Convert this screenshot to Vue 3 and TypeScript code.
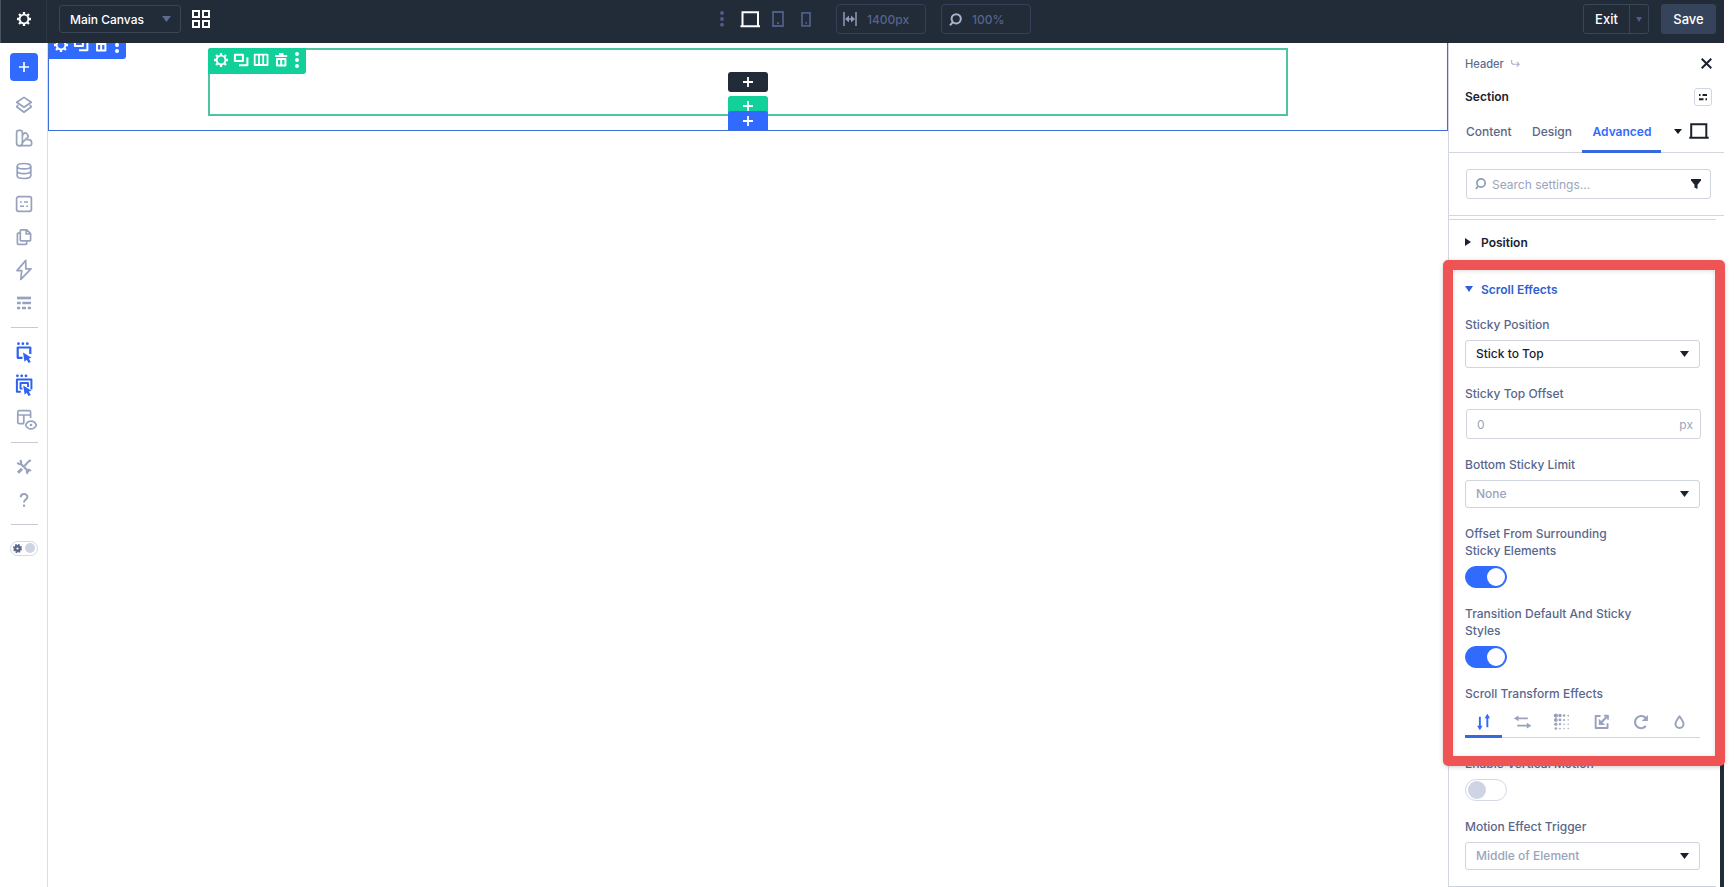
<script setup lang="ts">
interface Shape {
  d: string
  solid?: boolean
  width?: number
}
type IconName = string

const icons: Record<IconName, Shape[]> = {
  gear: [
    { d: 'M12 7.6a4.4 4.4 0 1 0 0 8.8a4.4 4.4 0 1 0 0-8.8z', width: 1.9 },
    { d: 'M12 5v2M12 17v2M5 12h2M17 12h2M7.05 7.05l1.4 1.4M15.55 15.55l1.4 1.4M16.95 7.05l-1.4 1.4M8.45 15.55l-1.4 1.4', width: 2.3 },
  ],
  duplicate: [
    { d: 'M5.9 6.7h8v6.2h-8z', width: 2 },
    { d: 'M18.4 9.2v8.1H10', width: 2 },
  ],
  columns: [{ d: 'M5.7 6.7h12.8v10.3h-12.8zM10 6.7v10.4M14.2 6.7v10.4', width: 1.8 }],
  trash: [
    { d: 'M6.2 8h12M10 6h4.4', width: 2 },
    { d: 'M8 11h8.4v6.5H8zM12.2 11v6.5', width: 2 },
  ],
  dots: [{ d: 'M12 3.9a2 2 0 1 0 0 4a2 2 0 1 0 0-4zM12 9.9a2 2 0 1 0 0 4a2 2 0 1 0 0-4zM12 15.9a2 2 0 1 0 0 4a2 2 0 1 0 0-4z', solid: true }],
  layers: [
    { d: 'M12 4.4L19.3 9.3L12 14.2L4.7 9.3z' },
    { d: 'M6.2 11.8L4.7 13.8L12 19.2L19.3 13.8L17.8 11.8' },
  ],
  swatch: [
    { d: 'M6.8 4.3h1.4a2.2 2.2 0 0 1 2.2 2.2V17a2.6 2.6 0 0 1-5.8 0V6.5a2.2 2.2 0 0 1 2.2-2.2z' },
    { d: 'M10.4 9.2l1.4-1.6a2 2 0 0 1 3 .1l.9 1.2a2 2 0 0 1-.3 2.7l-5.6 5.6' },
    { d: 'M7.6 19.7h10.2a1.8 1.8 0 0 0 1.8-1.8v-1.2a3 3 0 0 0-3-3h-2' },
    { d: 'M7.4 16.6h.2', width: 1.3 },
  ],
  database: [
    { d: 'M5.2 7.2c0-3.6 13.6-3.6 13.6 0s-13.6 3.6-13.6 0z' },
    { d: 'M5.2 7.2v9.6c0 3.6 13.6 3.6 13.6 0V7.2M5.2 12c0 3.5 13.6 3.5 13.6 0' },
  ],
  form: [
    { d: 'M6.6 4.7h10.8a2 2 0 0 1 2 2v10.6a2 2 0 0 1-2 2H6.6a2 2 0 0 1-2-2V6.7a2 2 0 0 1 2-2z' },
    { d: 'M8 10h1.8M12 10h4M8 14.2h4M14.2 14.2H16', width: 1.5 },
  ],
  pages: [
    { d: 'M9.3 4.8h5.4l3.9 3.9v6.2a1 1 0 0 1-1 1H9.3a1 1 0 0 1-1-1V5.8a1 1 0 0 1 1-1zM14.2 5v4h4' },
    { d: 'M8.3 8.2H6.3a.9 .9 0 0 0-.9 .9v9.3a.9 .9 0 0 0 .9 .9h7.5a.9 .9 0 0 0 .9-.9v-2.5' },
  ],
  bolt: [{ d: 'M13.8 2.4L5 12.6h4.7l-.9 8.8L19 10.8h-5.2z' }],
  rows: [
    { d: 'M5 7h14', width: 2.7 },
    { d: 'M5 12h3.8M10.3 12H19', width: 2.5 },
    { d: 'M5 17h3.2M10 17h4M15.8 17h3.2', width: 2.7 },
  ],
  select: [
    { d: 'M6.5 2.3a1.4 1.4 0 1 0 0 2.8a1.4 1.4 0 1 0 0-2.8zM10.9 2.3a1.4 1.4 0 1 0 0 2.8a1.4 1.4 0 1 0 0-2.8zM15.3 2.3a1.4 1.4 0 1 0 0 2.8a1.4 1.4 0 1 0 0-2.8z', solid: true },
    { d: 'M10.5 17.8H5.7V7.5h12.6v6.5', width: 2.2 },
    { d: 'M11 12.6l8.6 5.2-2.8.8 1.9 3.3-2.1 1.2-1.9-3.3-2.2 2z', solid: true },
  ],
  selectAll: [
    { d: 'M5.4 1.4a1.4 1.4 0 1 0 0 2.8a1.4 1.4 0 1 0 0-2.8zM9.7 1.4a1.4 1.4 0 1 0 0 2.8a1.4 1.4 0 1 0 0-2.8zM14 1.4a1.4 1.4 0 1 0 0 2.8a1.4 1.4 0 1 0 0-2.8z', solid: true },
    { d: 'M8.8 18.8H4.9V6.4h14.5v10', width: 2 },
    { d: 'M10.6 15.6H8.5V10h7.5v4', width: 1.9 },
    { d: 'M11.2 12.6l8.4 5.2-2.8.8 1.9 3.3-2.1 1.2-1.9-3.3-2 2z', solid: true },
  ],
  viewLayout: [
    { d: 'M12 17.6H7.2a1.4 1.4 0 0 1-1.4-1.4V6a1.4 1.4 0 0 1 1.4-1.4h10a1.4 1.4 0 0 1 1.4 1.4v6M5.8 9h12.8M11.8 9v8.400' },
    { d: 'M13.6 19c2.3-5.200 8.500-5.200 10.800 0c-2.300 5.200-8.500 5.200-10.800 0z' },
    { d: 'M19 17.700a1.300 1.300 0 1 0 0 2.600a1.300 1.300 0 1 0 0-2.600z', solid: true },
  ],
  tools: [
    { d: 'M8 8l9 9', width: 2.2 },
    { d: 'M5.4 7.6A3 3 0 0 0 8.8 9A3 3 0 0 0 8 5.2M15.8 18.8A3 3 0 0 1 15.2 15.2A3 3 0 0 1 18.9 15.9', width: 2 },
    { d: 'M18.9 5.2l-2.5 1.5L12.5 11', width: 2 },
    { d: 'M10 13.8l-4 4', width: 3 },
  ],
  help: [
    { d: 'M8.8 9.2c0-4.2 6.6-4.2 6.6-.2c0 2.6-3.4 2.6-3.4 5.4', width: 2 },
    { d: 'M11 16.6h2.1v2.2H11z', solid: true },
  ],
  vertical: [
    { d: 'M8.2 6.5v12M16 17.5v-12', width: 2 },
    { d: 'M5.3 16l2.9 4.6L11 16zM13.2 8L16 3.4L18.8 8z', solid: true },
  ],
  horizontal: [
    { d: 'M6.5 8.2h11M6.5 15.8h11', width: 1.9 },
    { d: 'M7.8 5.2v6L3 8.2zM16.5 12.8v6l4.8-3z', solid: true },
  ],
  scaleOut: [
    { d: 'M11 5.8H5.9v12.4h12.4v-5', width: 2 },
    { d: 'M18.6 5.5l-7.2 7.2', width: 2.2 },
    { d: 'M9.2 8.5v6.7h6.7z', solid: true },
    { d: 'M14.6 5.4h4.2v4.2', width: 1.7 },
  ],
  rotate: [
    { d: 'M17.6 16.2a6.4 6.4 0 1 1 .2-8', width: 2.2 },
    { d: 'M19.7 4.6v6.4h-6.4z', solid: true },
  ],
  drop: [{ d: 'M12 6c-2.2 3.4-4.2 5.6-4.2 8a4.2 4.2 0 0 0 8.4 0c0-2.4-2-4.6-4.2-8z', width: 2 }],
}

const groups: { tone: string; items: IconName[] }[] = [
  { tone: 'muted', items: ['layers', 'swatch', 'database', 'form', 'pages', 'bolt', 'rows'] },
  { tone: 'active', items: ['select', 'selectAll', 'viewLayout'] },
  { tone: 'muted', items: ['tools', 'help'] },
]

const sectionTools: IconName[] = ['gear', 'duplicate', 'trash', 'dots']
const rowTools: IconName[] = ['gear', 'duplicate', 'columns', 'trash', 'dots']
const effectTabs: IconName[] = ['vertical', 'horizontal', 'fade', 'scaleOut', 'rotate', 'drop']
const toolBox = (name: IconName): string => (name === 'dots' ? '6 2 12 20' : '2 2 20 20')

interface Field {
  label: string
  kind: 'select' | 'input' | 'toggle' | 'tabs'
  value?: string
  filled?: boolean
  on?: boolean
}
const fields: Field[] = [
  { label: 'Sticky Position', kind: 'select', value: 'Stick to Top', filled: true },
  { label: 'Sticky Top Offset', kind: 'input', value: '0' },
  { label: 'Bottom Sticky Limit', kind: 'select', value: 'None' },
  { label: 'Offset From Surrounding Sticky Elements', kind: 'toggle', on: true },
  { label: 'Transition Default And Sticky Styles', kind: 'toggle', on: true },
  { label: 'Scroll Transform Effects', kind: 'tabs' },
  { label: 'Enable Vertical Motion', kind: 'toggle', on: false },
  { label: 'Motion Effect Trigger', kind: 'select', value: 'Middle of Element' },
]
</script>

<template>
  <div class="app">
    <header class="topbar">
      <div class="gear-cell">
        <svg class="ico" viewBox="0 0 24 24"><path v-for="s in icons.gear" :key="s.d" :d="s.d" :stroke-width="s.width" /></svg>
      </div>
      <div class="canvas-select">
        <span>Main Canvas</span>
        <svg width="9" height="6" viewBox="0 0 9 6"><path d="M0 0h9L4.5 6z" fill="#5b6a92" /></svg>
      </div>
      <svg class="grid-icon" width="18" height="18" viewBox="0 0 18 18"><path d="M1 1h6v6H1zM11 1h6v6h-6zM1 11h6v6H1zM11 11h6v6h-6z" fill="none" stroke="#fff" stroke-width="2" /></svg>
      <div class="devices">
        <svg width="92" height="20" viewBox="0 0 92 20" fill="none" stroke="#4f5e88" stroke-width="2">
          <g fill="#4f5e88" stroke="none"><circle cx="2" cy="4" r="1.9" /><circle cx="2" cy="10" r="1.9" /><circle cx="2" cy="15.7" r="1.9" /></g>
          <path d="M22.5 17V3.2H38V17M20.5 17.2H40" stroke="#fff" />
          <path d="M53 3h10v14H53zM57 14.2h2" stroke-width="1.8" />
          <path d="M82 3.8h8v13h-8zM85.500 14H87" stroke-width="1.8" />
        </svg>
      </div>
      <div class="topfield width-field">
        <svg width="14" height="14" viewBox="0 0 14 14"><path d="M1 0v14M13 0v14M3 7h8" stroke="#8f9bb8" stroke-width="1.5" /><path d="M2 7l4-3.5v7zM12 7L8 3.5v7z" fill="#8f9bb8" /></svg>
        <span>1400px</span>
      </div>
      <div class="topfield zoom-field">
        <svg width="13" height="13" viewBox="0 0 13 13" fill="none" stroke="#a9b3cc" stroke-width="2"><circle cx="7.2" cy="5.8" r="4.6" /><path d="M4 9l-3 3.3" /></svg>
        <span>100%</span>
      </div>
      <div class="exit">
        <span>Exit</span>
        <i><svg width="6" height="5" viewBox="0 0 6 5"><path d="M0 0h6L3 5z" fill="#4f5e88" /></svg></i>
      </div>
      <div class="save">Save</div>
    </header>

    <div class="body">
      <aside class="rail">
        <button class="add">
          <svg width="10" height="10" viewBox="0 0 10 10"><path d="M5 0v10M0 5h10" stroke="#fff" stroke-width="1.7" /></svg>
        </button>
        <template v-for="(g, gi) in groups" :key="gi">
          <hr v-if="gi" />
          <div v-for="name in g.items" :key="name" class="slot" :class="name === 'viewLayout' ? 'muted' : g.tone">
            <svg class="ico" viewBox="0 0 24 24">
              <path v-for="s in icons[name]" :key="s.d" :d="s.d" :class="{ solid: s.solid }" :stroke-width="s.width" />
            </svg>
          </div>
        </template>
        <hr />
        <div class="theme">
          <svg width="9" height="9" viewBox="0 0 9 9" stroke="#5a6788" fill="none"><circle cx="4.5" cy="4.5" r="2.3" stroke-width="2.4" /><circle cx="4.5" cy="4.5" r="3.8" stroke-width="1.400" stroke-dasharray="1.8 1.184" /></svg>
          <b></b>
        </div>
      </aside>

      <main class="canvas">
        <section class="section-box">
          <div class="tools section-tools">
            <svg v-for="n in sectionTools" :key="n" class="ico" :class="n" :viewBox="toolBox(n)">
              <path v-for="s in icons[n]" :key="s.d" :d="s.d" :class="{ solid: s.solid }" :stroke-width="s.width" />
            </svg>
          </div>
          <div class="row-box">
            <div class="tools row-tools">
              <svg v-for="n in rowTools" :key="n" class="ico" :class="n" :viewBox="toolBox(n)">
                <path v-for="s in icons[n]" :key="s.d" :d="s.d" :class="{ solid: s.solid }" :stroke-width="s.width" />
              </svg>
            </div>
          </div>
          <button v-for="c in ['dark', 'green', 'blue']" :key="c" class="insert" :class="c">
            <svg width="10" height="10" viewBox="0 0 10 10"><path d="M5 0v10M0 5h10" stroke="#fff" stroke-width="1.8" /></svg>
          </button>
        </section>
      </main>

      <aside class="panel">
        <div class="crumb">
          <span>Header</span>
          <svg width="9" height="7" viewBox="0 0 9 7" fill="none" stroke="#a9b2c8" stroke-width="1.1"><path d="M.6 0v2.2q0 2 2 2H8M5.8 1.8L8.2 4.2L5.8 6.6" /></svg>
          <svg class="close" width="11" height="11" viewBox="0 0 11 11"><path d="M.7.7l9.6 9.6M10.3.7L.7 10.3" stroke="#1b222e" stroke-width="2" /></svg>
        </div>
        <div class="heading">
          <span>Section</span>
          <div class="preset"><svg width="10" height="8" viewBox="0 0 10 8"><path d="M1 2h1.5M4.5 2H9M1 6.2h4.5M7.5 6.2H9" stroke="#1b222e" stroke-width="1.9" /></svg></div>
        </div>
        <nav class="tabs">
          <span>Content</span><span>Design</span><span class="on">Advanced</span>
          <svg class="tab-caret" width="8" height="5" viewBox="0 0 8 5"><path d="M0 0h8L4 5z" fill="#111827" /></svg>
          <svg class="tab-device" width="20" height="16" viewBox="0 0 20 16"><path d="M2.2 14V1.2h15.1V14M.3 14.8h19.4" fill="none" stroke="#1b222e" stroke-width="2" /></svg>
        </nav>
        <div class="search">
          <svg width="11" height="12" viewBox="0 0 11 12" fill="none" stroke="#8f9bb5" stroke-width="1.7"><circle cx="6" cy="5" r="4.1" /><path d="M3.2 8L.8 11" /></svg>
          <span>Search settings...</span>
          <svg class="filter" width="10" height="10" viewBox="0 0 10 10"><path d="M0 0h10v1.5L6.5 5.7V10L3.5 8.4V5.7L0 1.5z" fill="#1b222e" /></svg>
        </div>
        <div class="group position">
          <svg width="6" height="8" viewBox="0 0 6 8"><path d="M0 0l6 4l-6 4z" fill="#1b222e" /></svg>
          <span>Position</span>
        </div>
        <div class="group open">
          <svg width="8" height="6" viewBox="0 0 8 6"><path d="M0 0h8L4 6z" fill="#2f5fe0" /></svg>
          <span>Scroll Effects</span>
        </div>
        <div class="fields">
          <div v-for="f in fields" :key="f.label" class="field">
            <label>{{ f.label }}</label>
            <div v-if="f.kind === 'select'" class="select" :class="{ filled: f.filled }">
              <span>{{ f.value }}</span>
              <svg width="9" height="6" viewBox="0 0 9 6"><path d="M0 0h9L4.5 6z" fill="#1b222e" /></svg>
            </div>
            <div v-else-if="f.kind === 'input'" class="input"><span>{{ f.value }}</span><span>px</span></div>
            <div v-else-if="f.kind === 'toggle'" class="toggle" :class="{ on: f.on }"><b></b></div>
            <div v-else class="effects">
              <div v-for="(n, i) in effectTabs" :key="n" :class="{ on: i === 0 }">
                <svg v-if="n === 'fade'" class="ico" viewBox="0 0 24 24">
                  <template v-for="r in 4" :key="r">
                    <circle v-for="c in 4" :key="c" class="solid" :cx="1.8 + c * 4.3" :cy="0.8 + r * 4.5" :r="Math.max(0.7, 3 - c * 0.45 - r * 0.3)" />
                  </template>
                </svg>
                <svg v-else class="ico" viewBox="0 0 24 24">
                  <path v-for="s in icons[n]" :key="s.d" :d="s.d" :class="{ solid: s.solid }" :stroke-width="s.width" />
                </svg>
              </div>
            </div>
          </div>
        </div>
        <div class="group-end"></div>
        <div class="scrollbar"></div>
      </aside>
    </div>
    <div class="highlight"></div>
  </div>
</template>

<style>
body { margin: 0; background: #fff; }
</style>

<style scoped>
* { box-sizing: border-box; }
.app {
  position: relative;
  width: 1735px;
  height: 887px;
  overflow: hidden;
  background: #fff;
  font-family: Inter, "Liberation Sans", sans-serif;
  font-size: 12px;
  font-weight: 500;
  color: #1b222e;
}
button { border: 0; padding: 0; display: flex; align-items: center; justify-content: center; }
svg { flex: none; display: block; }
.ico { width: 24px; height: 24px; fill: none; stroke: currentColor; stroke-width: 1.7; stroke-linejoin: round; overflow: visible; }
.ico .solid { fill: currentColor; stroke: none; }

.topbar { display: flex; width: 1724px; height: 43px; padding-right: 8px; background: #222b38; color: #fff; font-size: 13px; }
.gear-cell { width: 47px; height: 43px; border-left: 1px solid #4a5362; border-right: 1px solid #2c3645; display: flex; align-items: center; justify-content: center; padding: 0 0 5px 1px; }
.canvas-select { width: 122px; height: 28px; margin: 5px 0 0 12px; padding: 0 9px 0 10px; border: 1px solid #3a4558; border-radius: 3px; display: flex; align-items: center; justify-content: space-between; font-size: 12px; }
.grid-icon { margin: 10px 0 0 11px; }
.devices { margin: 9px 0 0 510px; }
.topfield { height: 30px; margin-top: 4px; border: 1px solid #35405a; border-radius: 4px; display: flex; align-items: center; color: #56648c; font-size: 12px; width: 90px; }
.width-field { margin-left: 24px; padding-left: 6px; gap: 10px; }
.zoom-field { margin-left: 15px; padding-left: 7px; gap: 10px; }
.exit { display: flex; width: 66px; height: 30px; margin: 4px 0 0 auto; border: 1px solid #3a4558; border-radius: 3px; }
.exit span { width: 46px; border-right: 1px solid #3a4558; display: flex; align-items: center; justify-content: center; }
.exit i { flex: 1; display: flex; align-items: center; justify-content: center; }
.save { width: 55px; height: 30px; margin: 4px 0 0 12px; border-radius: 3px; background: #35445a; display: flex; align-items: center; justify-content: center; }

.body { display: flex; width: 1724px; height: 844px; }
.rail { width: 48px; border-right: 1px solid #d9dde5; display: flex; flex-direction: column; align-items: center; padding: 10px 0 0 1px; }
.add { width: 28px; height: 28px; margin-bottom: 7.5px; border-radius: 4px; background: #316aff; flex: none; }
.slot { width: 28px; height: 33px; display: flex; align-items: center; justify-content: center; flex: none; }
.muted { color: #98a2bc; }
.active { color: #2f62ee; }
.rail hr { width: 27px; height: 1px; margin: 7px 0 8px; border: 0; background: #c6cad4; flex: none; }
.theme { width: 28px; height: 15px; margin-top: 8px; padding: 0 2px; border: 1px solid #d3d8e4; border-radius: 8px; display: flex; align-items: center; justify-content: space-between; }
.theme b { width: 10px; height: 10px; border-radius: 50%; background: #cdd4e4; }

.canvas { width: 1400px; }
.section-box { position: relative; height: 88px; border: 1px solid #3e6cd8; border-top: 0; overflow: hidden; }
.tools { display: flex; align-items: center; color: #fff; }
.tools .ico { width: 20px; height: 20px; }
.tools .dots { width: 12px; }
.section-tools { position: absolute; left: -1px; top: -10px; width: 78px; height: 26px; padding: 0 0 2px 3px; background: #316aff; border-radius: 0 0 3px 0; }
.row-box { margin: 5px 0 0 159px; width: 1080px; height: 68px; border: 2px solid #4fc3a2; border-radius: 3px 0 0 0; }
.row-tools { width: 98px; height: 26px; margin: -2px 0 0 -2px; padding: 0 0 2px 3px; background: #11d099; border-radius: 3px 0 3px 0; }
.insert { position: absolute; left: 679px; width: 40px; height: 20px; border-radius: 3px; }
.insert.dark { top: 29px; background: #222b38; }
.insert.green { top: 53px; background: #11d099; }
.insert.blue { top: 68px; border-radius: 3px 3px 0 0; background: #316aff; }

.panel { position: relative; width: 276px; border-left: 1px solid #d3d8e0; }
.crumb { height: 41px; padding: 0 12px 0 16px; display: flex; align-items: center; gap: 7px; font-size: 11.1px; color: #5f6c8e; }
.crumb .close { margin-left: auto; }
.heading { height: 26px; padding: 0 12px 0 16px; display: flex; align-items: center; justify-content: space-between; font-weight: 600; }
.heading span { margin-top: -1px; }
.preset { width: 18px; height: 18px; margin-top: -1px; border: 1px solid #cfd6e4; border-radius: 3px; display: flex; align-items: center; justify-content: center; }
.tabs { display: flex; height: 43px; border-bottom: 1px solid #d3d7df; padding-left: 17px; align-items: center; font-size: 12px; color: #5b6787; }
.tabs span { margin-right: 20.5px; }
.tabs .on { width: 79px; text-align: center; height: 43px; line-height: 43px; margin: 0 0 -1px -10px; color: #316aff; border-bottom: 3px solid #3569dc; font-weight: 600; flex: none; }
.tab-caret { margin-left: 13px; }
.tab-device { margin-left: 7px; }
.search { display: flex; align-items: center; width: 245px; height: 30px; margin: 16px 0 16px 17px; padding: 0 9px 0 8px; border: 1px solid #cfd4de; border-radius: 3px; color: #9aa4bb; font-weight: 400; }
.search span { margin-left: 6px; }
.search .filter { margin-left: auto; }
.group { display: flex; align-items: center; padding-left: 16px; font-weight: 600; }
.position { position: relative; height: 51px; padding-top: 3px; border-top: 1px solid #d3d7df; }
.position::before { content: ""; position: absolute; top: 3px; left: 0; width: 267px; height: 1px; background: #d3d7df; }
.position svg { margin: -1px 0 0 -.5px; }
.position span { margin-left: 10.5px; }
.open { height: 48px; padding-bottom: 2px; color: #2f5fd0; }
.open span { margin-left: 8px; }
.fields { display: flex; flex-direction: column; gap: 17px; padding: 2px 0 0 16px; }
.field label { display: block; width: 175px; padding-bottom: 1px; margin-bottom: 6px; line-height: 17px; color: #5a678c; }
.select, .input { display: flex; align-items: center; justify-content: space-between; width: 235px; height: 28px; padding: 0 10px; border: 1px solid #cfd4de; border-radius: 3px; color: #9aa4bb; }
.select span { margin-top: -1px; }
.select.filled { color: #1b222e; }
.input { height: 30px; margin-left: 1px; padding-right: 7px; font-weight: 400; }
.toggle { width: 42px; height: 22px; border: 1px solid #d3d9e5; border-radius: 11px; padding: 1px; display: flex; }
.toggle b { width: 18px; height: 18px; border-radius: 50%; background: #ced4e3; margin-left: 1px; }
.toggle.on { background: #316aff; border-color: #316aff; justify-content: flex-end; }
.toggle.on b { background: #fff; margin: 0; }
.effects { display: flex; width: 235px; height: 29px; border-bottom: 1px solid #d3d7df; color: #98a2bc; gap: 2px; }
.effects div { width: 37.2px; height: 29px; display: flex; justify-content: center; align-items: flex-start; padding-top: 1px; }
.effects .on { color: #316aff; border-bottom: 3px solid #3569dc; }
.effects .ico { width: 23px; height: 24px; }
.group-end { width: 267px; height: 1px; margin-top: 16px; background: #cdd1da; }
.scrollbar { position: absolute; right: 0; bottom: 0; width: 4px; height: 125px; background: #222b38; }
.highlight { position: absolute; left: 1443px; top: 260px; width: 282px; height: 506px; border: 10px solid #ef5455; border-radius: 5px; box-shadow: 0 1px 4px rgba(60, 20, 20, .22), inset 0 1px 4px rgba(60, 20, 20, .16); }
</style>
